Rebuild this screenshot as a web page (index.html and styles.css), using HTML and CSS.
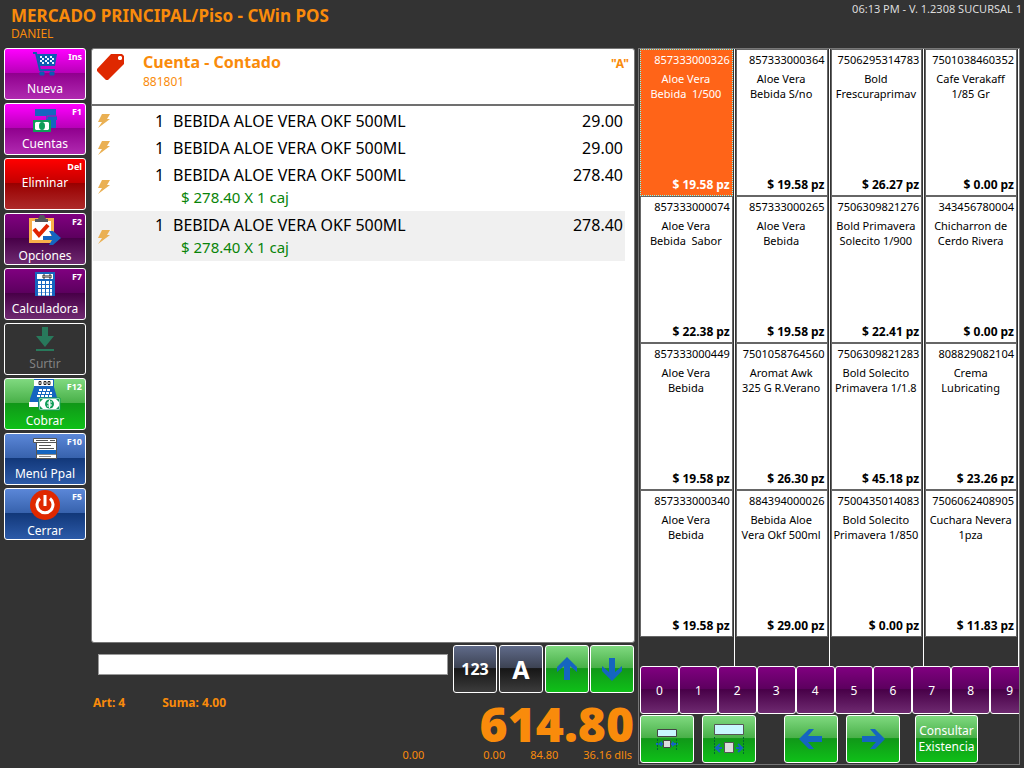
FILE: index.html
```html
<!DOCTYPE html>
<html lang="es">
<head>
<meta charset="utf-8">
<meta name="viewport" content="width=device-width, initial-scale=1">
<title>CWin POS</title>
<link rel="stylesheet" href="styles.css">
</head>
<body class="app">
<header class="top">
  <div>
    <h1 class="title">MERCADO PRINCIPAL/Piso - CWin POS</h1>
    <div class="user">DANIEL</div>
  </div>
  <div class="version">06:13 PM - V. 1.2308 SUCURSAL 1</div>
</header>
<div class="body">
<nav class="side">
  <button class="tile magenta"><kbd class="key">Ins</kbd>
    <svg class="ico" width="26" height="26" viewBox="0 0 26 26" fill="none" stroke="#0b5cb3" stroke-width="2"><path d="M1 2h3l4 17h15"/><path d="M5 3h20l-2 12H8z" fill="#0b5cb3" stroke="none"/><path d="M8 6h2M13 6h2M18 6h2M10 8h2M15 8h2M20 8h2M8 10h2M13 10h2M18 10h2M10 12h2M15 12h2M20 12h2" stroke="#e8f4ff"/><path d="M8 21h4v3H8zM18 21h4v3h-4z" fill="#0b5cb3" stroke-width="1"/></svg>
    <span>Nueva</span></button>
  <button class="tile magenta"><kbd class="key">F1</kbd>
    <svg class="ico" width="26" height="26" viewBox="0 0 26 26"><path fill="#1565c0" d="M3 3h21v7H3zM14 10h11v4H14zM18 14h6v8h-6z"/><path d="M15 13v-3h10" fill="none" stroke="#c000c0"/><path fill="#0f9d58" d="M1 14h18v12H1z"/><path fill="#fff" d="M4 16h12l1 1v6l-1 1H4l-1-1v-6z"/><ellipse cx="10" cy="20" rx="3" ry="4" fill="#0f9d58"/></svg>
    <span>Cuentas</span></button>
  <button class="tile red plain"><kbd class="key">Del</kbd><span>Eliminar</span></button>
  <button class="tile tall purple"><kbd class="key">F2</kbd>
    <svg class="ico" width="34" height="34" viewBox="0 0 34 34"><path fill="#f9b04a" d="M1 4h25v25H1z"/><path fill="#fff" d="M4 7h19v19H4z"/><path fill="#54595e" d="M7 5h3l2-4h4l2 4h2v3H7z"/><path d="M6 15l5 6 9-10" fill="none" stroke="#e02400" stroke-width="4"/><path fill="#1565c0" d="M15 22h9l-3-5h4l8 7-8 7h-4l3-5h-9z"/></svg>
    <span>Opciones</span></button>
  <button class="tile purple"><kbd class="key">F7</kbd>
    <svg class="ico" width="20" height="26" viewBox="0 0 20 26"><path fill="#1565c0" d="M0 1h20v24H0z"/><path fill="#fff" d="M2 3h16v5H2z"/><path d="M8 4h2v3H8zM14 4h2v3h-2zM12 4v3" fill="none" stroke="#222"/><path d="M3 11.500h14M3 15.500h14M3 19.500h14M3 23h14" stroke="#fff" stroke-width="3" stroke-dasharray="3 1"/></svg>
    <span>Calculadora</span></button>
  <button class="tile off" disabled>
    <svg class="ico" width="20" height="26" viewBox="0 0 20 26"><path fill="#28795b" d="M7 1h6v9h6l-9 11-9-11h6zM1 23h18v2H1z"/></svg>
    <span>Surtir</span></button>
  <button class="tile tall green"><kbd class="key">F12</kbd>
    <svg class="ico" width="34" height="34" viewBox="0 0 34 34"><path fill="#1565c0" d="M6 0h20v8l4 14v6H2v-8L6 8z"/><path fill="#fff" d="M6 1h19v6H6zM1 23h9v5H1z"/><path d="M11 2.500h2v3h-2zM16 2.500h2v3h-2zM20 2.500h2v3h-2z" fill="none" stroke="#222"/><path d="M11 11h12M10 14h14M9 17h15" stroke="#fff" stroke-width="2" stroke-dasharray="3 1"/><path fill="#fff" stroke="#0f9d58" d="M11 19h21v12H11z"/><path fill="#0f9d58" d="M12 20h3l-3 3zM31 20h-3l3 3zM12 30h3l-3-3zM31 30h-3l3-3z"/><circle cx="21.500" cy="25" r="4.500" fill="#0f9d58"/><path d="M24 23h-4v2h3v2h-4M21.500 21v8" fill="none" stroke="#fff"/></svg>
    <span>Cobrar</span></button>
  <button class="tile blue"><kbd class="key">F10</kbd>
    <svg class="ico" width="26" height="26" viewBox="0 0 26 26"><path fill="#fff" stroke="#555" d="M1.500 2.500h23v4h-23zM4.500 6.500h20v16h-20z"/><path d="M4 4.500h12M18 4.500h5M7 9.500h12M7 12.500h15" stroke="#555"/><path fill="#1565c0" d="M5 14h19v4H5z"/><path d="M5 18.500h19M7 20.500h12" stroke="#888"/></svg>
    <span>Menú Ppal</span></button>
  <button class="tile tall blue"><kbd class="key">F5</kbd>
    <svg class="ico" width="34" height="34" viewBox="0 0 34 34"><circle cx="17" cy="16" r="15" fill="#df2800"/><path d="M12 9.500a8 8 0 1 0 10 0M17 6v11" fill="none" stroke="#fff" stroke-width="3"/></svg>
    <span>Cerrar</span></button>
</nav>
<main class="sale">
  <section class="ticket">
    <header class="account">
      <svg width="28" height="28" viewBox="0 0 28 28"><path fill="#df2800" fill-rule="evenodd" d="M14 1h11l2 2v8L11 27h-2L0 18v-2zM22 3h2l1 1v2l-1 1h-2l-1-1V4z"/></svg>
      <div class="account-name"><h2>Cuenta - Contado</h2><span>881801</span></div>
      <b class="series">"A"</b>
    </header>
    <ul class="lines">
      <li class="line"><svg class="bolt" viewBox="0 0 14 16"><path d="M5 1h8l-3 5h3L1 15l4-6H1z"/></svg><span class="qty">1</span><span class="desc">BEBIDA ALOE VERA OKF 500ML</span><span class="amt">29.00</span></li>
      <li class="line"><svg class="bolt" viewBox="0 0 14 16"><path d="M5 1h8l-3 5h3L1 15l4-6H1z"/></svg><span class="qty">1</span><span class="desc">BEBIDA ALOE VERA OKF 500ML</span><span class="amt">29.00</span></li>
      <li class="line"><svg class="bolt" viewBox="0 0 14 16"><path d="M5 1h8l-3 5h3L1 15l4-6H1z"/></svg><span class="qty">1</span><span class="desc">BEBIDA ALOE VERA OKF 500ML<small>$ 278.40 X 1 caj</small></span><span class="amt">278.40</span></li>
      <li class="line current"><svg class="bolt" viewBox="0 0 14 16"><path d="M5 1h8l-3 5h3L1 15l4-6H1z"/></svg><span class="qty">1</span><span class="desc">BEBIDA ALOE VERA OKF 500ML<small>$ 278.40 X 1 caj</small></span><span class="amt">278.40</span></li>
    </ul>
  </section>
  <div class="entry">
    <input class="code" type="text" aria-label="Código">
    <div class="entry-keys">
      <button class="pad dark">123</button>
      <button class="pad dark letter">A</button>
      <div class="pair">
      <button class="pad green" aria-label="Subir"><svg width="22" height="24" viewBox="0 0 22 24"><path fill="#1565c0" d="M11 0l10 10v5l-7-6v14H8V9l-7 6v-5z"/></svg></button>
      <button class="pad green" aria-label="Bajar"><svg width="22" height="24" viewBox="0 0 22 24"><path fill="#1565c0" d="M11 24l10-10V9l-7 6V1H8v14L1 9v5z"/></svg></button>
      </div>
    </div>
  </div>
  <div class="summary">
    <div class="counts"><b>Art: 4</b><b>Suma: 4.00</b></div>
    <div class="total">614.80</div>
  </div>
  <div class="subtotals"><span class="first">0.00</span><span>0.00</span><span>84.80</span><span>36.16 dlls</span></div>
</main>
<section class="catalog">
  <div class="columns">
    <div class="column">
      <button class="product selected"><span>857333000326</span><span class="name">Aloe Vera<br>Bebida&nbsp; 1/500</span><b>$ 19.58 pz</b></button>
      <button class="product"><span>857333000074</span><span class="name">Aloe Vera<br>Bebida&nbsp; Sabor</span><b>$ 22.38 pz</b></button>
      <button class="product"><span>857333000449</span><span class="name">Aloe Vera<br>Bebida</span><b>$ 19.58 pz</b></button>
      <button class="product"><span>857333000340</span><span class="name">Aloe Vera<br>Bebida</span><b>$ 19.58 pz</b></button>
    </div>
    <div class="column">
      <button class="product"><span>857333000364</span><span class="name">Aloe Vera<br>Bebida S/no</span><b>$ 19.58 pz</b></button>
      <button class="product"><span>857333000265</span><span class="name">Aloe Vera<br>Bebida</span><b>$ 19.58 pz</b></button>
      <button class="product"><span>7501058764560</span><span class="name">Aromat Awk<br>325 G R.Verano</span><b>$ 26.30 pz</b></button>
      <button class="product"><span>884394000026</span><span class="name">Bebida Aloe<br>Vera Okf 500ml</span><b>$ 29.00 pz</b></button>
    </div>
    <div class="column">
      <button class="product"><span>7506295314783</span><span class="name">Bold<br>Frescuraprimav</span><b>$ 26.27 pz</b></button>
      <button class="product"><span>7506309821276</span><span class="name">Bold Primavera<br>Solecito 1/900</span><b>$ 22.41 pz</b></button>
      <button class="product"><span>7506309821283</span><span class="name">Bold Solecito<br>Primavera 1/1.8</span><b>$ 45.18 pz</b></button>
      <button class="product"><span>7500435014083</span><span class="name">Bold Solecito<br>Primavera 1/850</span><b>$ 0.00 pz</b></button>
    </div>
    <div class="column">
      <button class="product"><span>7501038460352</span><span class="name">Cafe Verakaff<br>1/85 Gr</span><b>$ 0.00 pz</b></button>
      <button class="product"><span>343456780004</span><span class="name">Chicharron de<br>Cerdo Rivera</span><b>$ 0.00 pz</b></button>
      <button class="product"><span>808829082104</span><span class="name">Crema<br>Lubricating</span><b>$ 23.26 pz</b></button>
      <button class="product"><span>7506062408905</span><span class="name">Cuchara Nevera<br>1pza</span><b>$ 11.83 pz</b></button>
    </div>
  </div>
  <div class="digits">
    <button class="digit purple">0</button><button class="digit purple">1</button><button class="digit purple">2</button><button class="digit purple">3</button><button class="digit purple">4</button><button class="digit purple">5</button><button class="digit purple">6</button><button class="digit purple">7</button><button class="digit purple">8</button><button class="digit purple">9</button>
  </div>
  <div class="actions">
    <div class="group">
      <button class="act green" aria-label="Reducir"><svg width="22" height="22" viewBox="0 0 22 22"><path fill="#c8f8ff" stroke="#444" d="M1.500 1.500h19v7h-19z"/><path d="M1.500 11v11M20.500 11v11" stroke="#063" stroke-dasharray="2 1"/><path d="M0 16h22" stroke="#1565c0" stroke-width="2" stroke-dasharray="2 1"/><path fill="#1565c0" d="M2 16l4-3v6zM20 16l-4-3v6z"/><path fill="#ddd" stroke="#444" d="M7.500 12.500h7v7h-7z"/></svg></button>
      <button class="act green" aria-label="Ampliar"><svg width="32" height="32" viewBox="0 0 32 32"><path fill="#c8f8ff" stroke="#555" d="M1.500 1.500h29v10h-29z"/><path d="M1.500 14v18M30.500 14v18" stroke="#063" stroke-dasharray="2 1"/><path d="M4 25h5M23 25h5" stroke="#1565c0" stroke-width="2"/><path d="M7 21l-4 4 4 4M25 21l4 4-4 4" fill="none" stroke="#1565c0" stroke-width="2"/><path fill="#ddd" stroke="#555" d="M11.500 19.500h9v10h-9z"/></svg></button>
    </div>
    <div class="group">
      <button class="act green" aria-label="Anterior"><svg width="24" height="20" viewBox="0 0 24 20"><path fill="#1565c0" d="M0 10L10 0h5l-6 7h14v6H9l6 7h-5z"/></svg></button>
      <button class="act green" aria-label="Siguiente"><svg width="24" height="20" viewBox="0 0 24 20"><path fill="#1565c0" d="M24 10L14 0H9l6 7H1v6h14l-6 7h5z"/></svg></button>
    </div>
    <button class="act stock green">Consultar Existencia</button>
  </div>
</section>
</div>
</body>
</html>
```
FILE: styles.css
```css
* { box-sizing: border-box; }

.app {
  margin: 0;
  min-height: 100vh;
  display: flex;
  flex-direction: column;
  background: #333;
  color: #f98b0b;
  font: 12px/15px "Noto Sans", "Open Sans", sans-serif;
}

button { font: inherit; cursor: pointer; }

.top {
  display: flex;
  justify-content: space-between;
  height: 48px;
  padding: 0 2px 0 11px;
}
.title { margin: 6px 0 0; font-size: 17px; line-height: 20px; }
.user { line-height: 16px; }
.version { padding-top: 1px; font-size: 11px; color: #ddd; }

.body {
  flex: 1;
  display: grid;
  grid-template-columns: 83px minmax(0, 552fr) minmax(0, 382fr);
  padding: 0 4px 3px 3px;
}

/* Left command bar */
.side { display: flex; flex-direction: column; gap: 3px; padding-left: 1px; }
.tile {
  position: relative;
  display: flex;
  flex-direction: column;
  align-items: center;
  justify-content: flex-end;
  height: 52px;
  padding: 0 0 3px;
  border: 1px solid #fff;
  border-radius: 3px;
  color: #fff;
}
.tile.plain { justify-content: center; }
.ico { flex: none; margin-bottom: 4px; }
.tile.tall { padding-bottom: 1px; }
.tall .ico { margin-bottom: 0; }
.key {
  position: absolute;
  top: 1px;
  right: 3px;
  font: bold 9px/13px "Noto Sans", sans-serif;
}
.magenta { background: linear-gradient(#f0f, #b800b8 48%, #90008e 49%, #b02ab0); }
.red { background: linear-gradient(#f00, #c40000 48%, #990000 49%, #ad2a2a); }
.purple { background: linear-gradient(#800080, #5c005e 48%, #480048 49%, #6e2a70); }
.green { background: linear-gradient(#80d980, #48b048 48%, #109818 49%, #0fc018); }
.blue { background: linear-gradient(#5b87d8, #3762ad 48%, #12387a 49%, #2c5aa8); }
.dark { background: linear-gradient(#606b8a, #3c4252 48%, #161616 49%, #3c3c3c); }
.off { background: #333; color: #828282; cursor: default; }

/* Current sale */
.sale { display: flex; flex-direction: column; padding: 0 0 3px 5px; }
.ticket {
  flex: 1;
  margin-right: 3px;
  border: 1px solid #777;
  border-radius: 3px;
  background: #fff;
}
.account {
  display: flex;
  height: 57px;
  padding: 4px 5px;
  border-bottom: 2px solid #707070;
}
.account-name { flex: 1; padding-left: 18px; }
.account h2 { margin: 0 0 3px; font-size: 16px; line-height: 18px; }
.series { padding-top: 3px; }
.lines { list-style: none; margin: 0; padding: 1px 9px 0 1px; }
.line {
  display: grid;
  grid-template-columns: 54px 22px 1fr auto;
  padding: 3px 2px 2px 4px;
  font-size: 16px;
  line-height: 22px;
  color: #000;
}
.line.current { background: #f0f0f0; }
.bolt { width: 14px; height: 16px; align-self: center; fill: #eab053; }
.qty { padding-left: 4px; }
.desc small {
  display: block;
  padding: 0 0 1px 8px;
  font-size: 15px;
  color: #088408;
}

.entry { display: flex; align-items: center; justify-content: space-between; height: 52px; padding: 0 4px 0 7px; }
.code { flex: 1; min-width: 0; height: 21px; margin-bottom: 10px; border: 1px solid #999; background: #fff; padding: 0 4px; font: inherit; }
.entry-keys { display: flex; gap: 2px; margin-left: 5px; }
.pair { display: flex; gap: 1px; }
.pad {
  display: grid;
  place-items: center;
  width: 44px;
  height: 48px;
  padding: 0;
  border: 1px solid #fff;
  border-radius: 3px;
  color: #fff;
  font: bold 16px/20px "Noto Sans", sans-serif;
}
.pad.letter { font-size: 25px; }
.summary { display: flex; justify-content: space-between; align-items: flex-start; height: 52px; }
.counts { display: flex; gap: 37px; padding-left: 2px; }
.total {
  padding: 4px 4px 0 0;
  font: 800 48px/50px "Open Sans", "Noto Sans", sans-serif;
}
.subtotals { display: flex; justify-content: flex-end; gap: 25px; padding-right: 6px; font-size: 11px; }
.subtotals .first { margin-right: 34px; }

/* Product browser */
.catalog {
  display: flex;
  flex-direction: column;
  min-width: 0;
  padding: 0 0 1px 1px;
  border: 1px solid #777;
  overflow: hidden;
}
.columns { flex: 1; display: grid; grid-template-columns: repeat(4, minmax(0, 1fr)); }
.column {
  display: flex;
  flex-direction: column;
  padding: 0 1px 29px 0;
  border-right: 1px solid #fff;
}
.column + .column { padding-left: 1px; }
.product {
  flex: 1;
  display: flex;
  flex-direction: column;
  padding: 2px 2px 3px 1px;
  border: 1px solid #666;
  background: #fff;
  color: #000;
  text-align: right;
  font-size: 11px;
  white-space: nowrap;
}
.product > span, .product b { align-self: stretch; }
.product .name { margin-top: 4px; text-align: center; }
.product b { margin-top: auto; font-size: 12px; }
.product.selected { background: #ff6418; color: #fff; border: 1px dotted #7ff; }

.digits { display: flex; margin-right: -10px; }
.digit {
  flex: 1;
  height: 48px;
  padding: 0;
  border: 1px solid #fff;
  border-radius: 3px;
  color: #fff;
}
.actions { display: flex; gap: 28px; padding: 1px 40px 0 0; }
.group { display: flex; gap: 8px; }
.act {
  display: grid;
  place-items: center;
  width: 54px;
  height: 48px;
  padding: 0;
  border: 1px solid #fff;
  border-radius: 3px;
  color: #fff;
}
.act.stock { width: 63px; margin-left: -13px; line-height: 16px; }
```
